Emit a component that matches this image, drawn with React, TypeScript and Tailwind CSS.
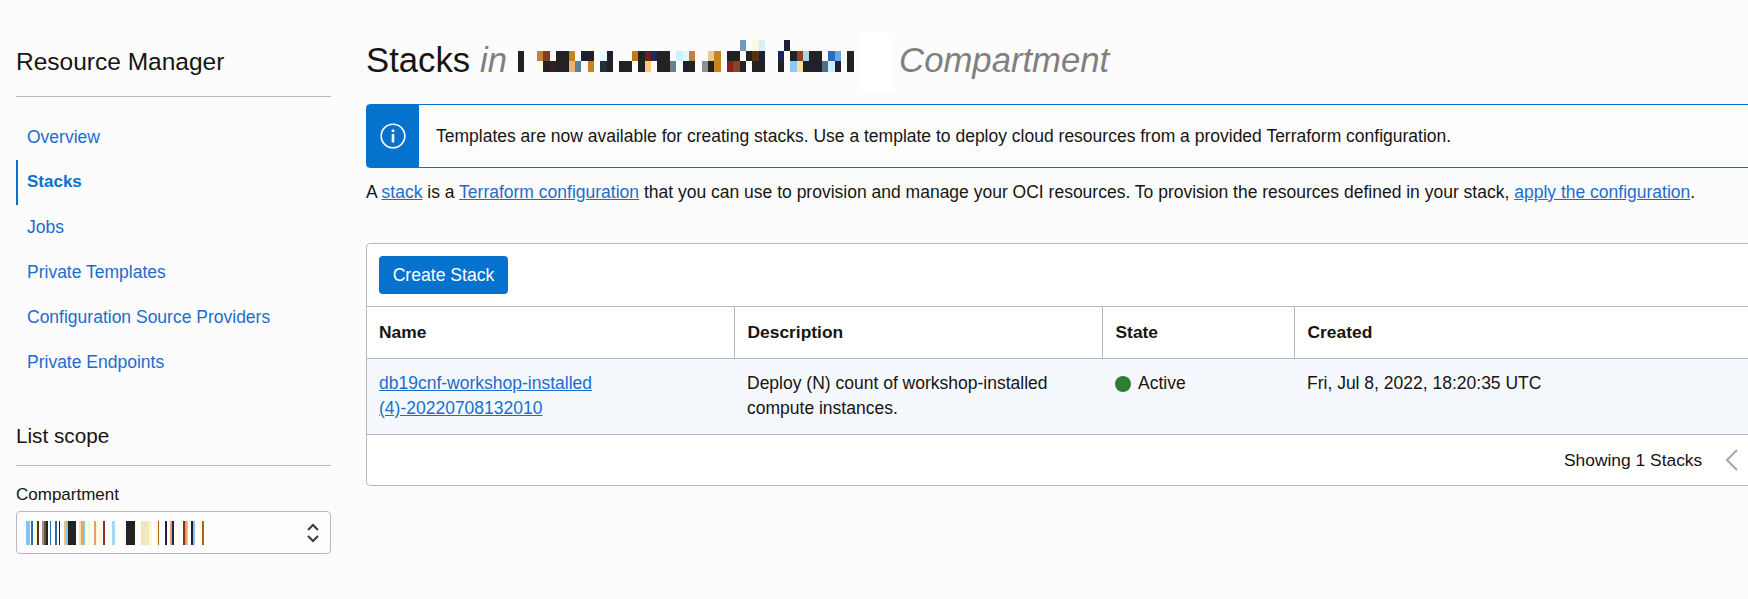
const headingCells: [number, number, number, string][] = [
  [518, 524, 1, "#222222"], [518, 524, 2, "#222222"],
  [537, 543, 1, "#c08040"], [543, 550, 1, "#843c24"], [556, 569, 1, "#222222"], [569, 575, 1, "#c8851f"],
  [581, 588, 1, "#1e2030"], [588, 594, 1, "#222222"], [600, 607, 1, "#e8f8fc"], [607, 613, 1, "#1e2030"],
  [632, 638, 1, "#c07a1c"], [638, 645, 1, "#222222"], [645, 651, 1, "#662222"], [651, 657, 1, "#1e2a5e"],
  [657, 670, 1, "#222222"], [676, 683, 1, "#c8f4fd"], [683, 689, 1, "#e0f8fc"], [689, 695, 1, "#c08040"],
  [708, 714, 1, "#f0c890"], [714, 721, 1, "#c8851f"], [727, 740, 1, "#222222"], [746, 752, 1, "#222222"],
  [752, 759, 1, "#5a3018"], [759, 765, 1, "#1e2030"], [778, 784, 1, "#1e2060"], [790, 797, 1, "#222222"],
  [797, 803, 1, "#8a4520"], [803, 809, 1, "#a8d4f0"], [809, 822, 1, "#222222"], [828, 835, 1, "#2b6cb8"],
  [835, 841, 1, "#60a8e8"], [847, 854, 1, "#222222"],
  [740, 746, 0, "#6f9bc0"], [752, 759, 0, "#fdf8e0"], [759, 765, 0, "#d8eefb"], [784, 790, 0, "#1e2030"],
  [537, 543, 2, "#fffbe6"], [543, 550, 2, "#222222"], [550, 556, 2, "#352020"], [556, 569, 2, "#222222"],
  [569, 575, 2, "#f0b070"], [575, 581, 2, "#5a8296"], [588, 594, 2, "#c8851f"], [600, 607, 2, "#22303c"],
  [607, 613, 2, "#222222"], [619, 632, 2, "#222222"], [638, 645, 2, "#222222"], [645, 651, 2, "#fcc880"],
  [657, 670, 2, "#222222"], [670, 676, 2, "#6a8090"], [683, 689, 2, "#1e2030"], [689, 695, 2, "#222222"],
  [702, 708, 2, "#909090"], [708, 714, 2, "#222222"], [714, 721, 2, "#c8851f"], [727, 733, 2, "#8a2020"],
  [733, 740, 2, "#8a4520"], [740, 746, 2, "#222222"], [752, 765, 2, "#222222"], [778, 784, 2, "#222222"],
  [790, 797, 2, "#88c8fc"], [797, 803, 2, "#fde0a0"], [803, 809, 2, "#222222"], [809, 822, 2, "#1e2030"],
  [822, 828, 2, "#4f6f84"], [828, 835, 2, "#c8f0fc"], [835, 841, 2, "#1e2030"], [847, 854, 2, "#222222"],
];

// x values are page pixels
const scopeStripes: [number, number, string][] = [
  [26, 30, "#84c4f4"], [31, 33, "#2a6cb0"], [35, 37, "#fdf8d0"], [37, 39, "#6b2520"], [42, 44, "#a89080"],
  [44, 46, "#6b5040"], [46, 48, "#222222"], [50, 51, "#2a6cb0"], [55, 57, "#2a6cb0"], [59, 60, "#1e2030"],
  [64, 66, "#f8c070"], [66, 68, "#84c4f4"], [68, 76, "#222222"], [79, 81, "#f8e0a0"], [81, 83, "#e8a060"],
  [83, 85, "#84c4f4"], [85, 87, "#fdf8d0"], [88, 90, "#fdf8d0"], [94, 96, "#e8a060"], [96, 98, "#fdf8d0"],
  [100, 102, "#fdf8d0"], [103, 105, "#8f2d20"], [112, 115, "#a0d8fc"], [123, 126, "#fdf5f0"], [126, 135, "#222222"],
  [141, 145, "#fce0c0"], [145, 149, "#e8ecc0"], [149, 152, "#fdf8d0"], [156, 157, "#fdf8d0"], [158, 159, "#a85a18"],
  [165, 167, "#1e2050"], [170, 172, "#e8a060"], [172, 174, "#1e2060"], [183, 185, "#8f2d20"], [185, 187, "#e8a060"],
  [187, 188, "#a0d8fc"], [191, 193, "#1e2030"], [193, 195, "#84c4f4"], [200, 201, "#fdf8d0"], [202, 204, "#a86020"],
];

const navItems = ["Overview", "Stacks", "Jobs", "Private Templates", "Configuration Source Providers", "Private Endpoints"];

function HeadingMosaic() {
  return (
    <svg width="336" height="32" viewBox="518 40 336 32" shapeRendering="crispEdges" className="mt-[7px] shrink-0 self-start">
      {headingCells.map(([x1, x2, row, fill], i) => (
        <rect key={i} x={x1} y={40 + row * 10.5} width={x2 - x1} height={10.5} fill={fill} />
      ))}
    </svg>
  );
}

function ScopeMosaic() {
  return (
    <svg width="229" height="27" viewBox="24 -3 229 27" shapeRendering="crispEdges" className="mt-[-3px] shrink-0">
      <rect x="24" y="0" width="221" height="24" fill="#fefefe" />
      <rect x="245" y="-3" width="8" height="27" fill="#ffffff" />
      {scopeStripes.map(([x1, x2, fill], i) => (
        <rect key={i} x={x1} y="0" width={x2 - x1} height="24" fill={fill} />
      ))}
    </svg>
  );
}

function Sidebar() {
  return (
    <aside className="ml-4 w-[315px] shrink-0 pt-[43px]">
      <h2 className="border-b border-[#b5b9c4] pb-[15px] text-[24.5px] leading-[38px] text-[#161513]">Resource Manager</h2>
      <nav className="mt-[18px] flex flex-col">
        {navItems.map((item) =>
          item === "Stacks" ? (
            <a key={item} className="h-[45px] border-l-2 border-[#0572ce] pl-[9px] text-[17px] font-bold leading-[44px] text-[#0572ce]">
              {item}
            </a>
          ) : (
            <a key={item} className="h-[45px] pl-[11px] text-[17.5px] leading-[45px] text-[#1a6dcf]">
              {item}
            </a>
          )
        )}
      </nav>
      <h3 className="mt-[35px] border-b border-[#b5b9c4] pb-[14px] text-[20.7px] leading-[31px] text-[#161513]">List scope</h3>
      <label className="mt-[17px] block text-[17px] leading-[24px] text-[#161513]">Compartment</label>
      <div className="mt-[4px] flex h-[43px] items-center rounded border border-[#b5b9c4] bg-[#fdfdfd] pl-[7px] pr-[10px]">
        <ScopeMosaic />
        <svg width="14" height="24" viewBox="0 0 14 24" className="ml-auto" fill="none" stroke="#3a3a3a" strokeWidth="2">
          <path d="M2 9l5-5 5 5" />
          <path d="M2 15l5 5 5-5" />
        </svg>
      </div>
    </aside>
  );
}

function StacksTable() {
  return (
    <section className="mt-[39px] rounded-l border border-[#b5b9c4] bg-white">
      <div className="px-3 py-3">
        <button className="block h-[38px] w-[129px] rounded bg-[#0572ce] text-[17.6px] text-white">Create Stack</button>
      </div>
      <table className="w-full table-fixed border-collapse">
        <thead>
          <tr className="h-[52px] border-y border-[#b5b9c4] text-left text-[17.4px] font-bold text-[#161513]">
            <th className="w-[367px] border-r border-[#b5b9c4] pl-3 font-bold">Name</th>
            <th className="w-[368px] border-r border-[#b5b9c4] pl-[13px] font-bold">Description</th>
            <th className="w-[192px] border-r border-[#b5b9c4] pl-[13px] font-bold">State</th>
            <th className="pl-[13px] font-bold">Created</th>
          </tr>
        </thead>
        <tbody>
          <tr className="h-[76px] border-b border-[#b5b9c4] bg-[#f5f8fc] align-top text-[17.5px] leading-[25px] text-[#161513]">
            <td className="pl-3 pr-3 pt-[12px]">
              <a className="text-[#1a6dcf] underline">db19cnf-workshop-installed (4)-20220708132010</a>
            </td>
            <td className="pl-[13px] pr-3 pt-[12px]">Deploy (N) count of workshop-installed compute instances.</td>
            <td className="pl-[13px] pt-[12px]">
              <span className="flex items-center gap-[7px]">
                <span className="h-4 w-4 rounded-full bg-[#2f7d32]" />
                Active
              </span>
            </td>
            <td className="pl-[13px] pt-[12px]">Fri, Jul 8, 2022, 18:20:35 UTC</td>
          </tr>
        </tbody>
      </table>
      <div className="flex h-[50px] items-center text-[17.4px] text-[#161513]">
        <span className="ml-[1197px]">Showing 1 Stacks</span>
        <svg width="14" height="24" viewBox="0 0 14 24" className="ml-[22px]" fill="none" stroke="#a9a9a9" strokeWidth="2.2">
          <path d="M13 2L3 12l10 10" />
        </svg>
      </div>
    </section>
  );
}

export default function App() {
  return (
    <div className="flex h-[599px] w-[1748px] overflow-hidden bg-[#fcfcfc] font-['Liberation_Sans',Arial,sans-serif]">
      <Sidebar />
      <main className="ml-[35px] w-[1500px] shrink-0 pt-[33px]">
        <h1 className="flex h-[58px] items-center pb-1 text-[34.7px] text-[#161513]">
          Stacks
          <em className="ml-[10px] mr-[11px] text-[#808080]">in</em>
          <HeadingMosaic />
          <span className="ml-[6px] h-[59px] w-[34px] shrink-0 self-start bg-white" />
          <em className="ml-[5px] text-[#808080]">Compartment</em>
        </h1>
        <div className="mt-[13px] flex h-[64px] rounded-l border border-[#0572ce] bg-[#fdfdfd]">
          <div className="flex w-[52px] shrink-0 items-center justify-center bg-[#0572ce]">
            <svg width="26" height="26" viewBox="0 0 26 26" fill="none" stroke="#ffffff">
              <circle cx="13" cy="13" r="11.8" strokeWidth="1.6" />
              <circle cx="13" cy="7.8" r="1.5" fill="#ffffff" stroke="none" />
              <path d="M13 11v8.5" strokeWidth="2.6" />
            </svg>
          </div>
          <p className="ml-[17px] self-center text-[17.5px] text-[#161513]">
            Templates are now available for creating stacks. Use a template to deploy cloud resources from a provided Terraform configuration.
          </p>
        </div>
        <p className="mt-[12px] text-[17.5px] leading-[24px] text-[#161513]">
          A <a className="text-[#1a6dcf] underline">stack</a> is a <a className="text-[#1a6dcf] underline">Terraform configuration</a> that you can use to provision and manage your OCI resources. To provision the resources defined in your stack, <a className="text-[#1a6dcf] underline">apply the configuration</a>.
        </p>
        <StacksTable />
      </main>
    </div>
  );
}
